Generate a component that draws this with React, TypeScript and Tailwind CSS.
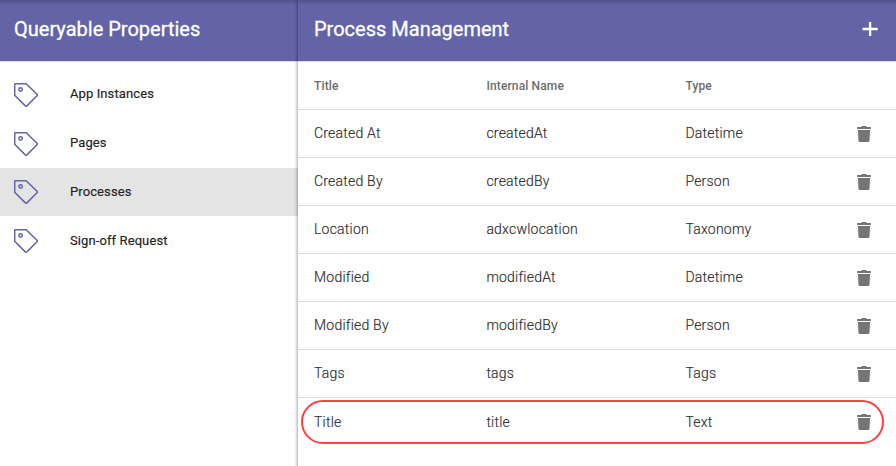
const items = [
  { label: 'App Instances', cls: 'mb-px', labelCls: '-mt-[3px]' },
  { label: 'Pages', cls: '', labelCls: '-mt-[3px]' },
  { label: 'Processes', cls: 'bg-[#e4e4e4] mb-px', labelCls: '-mt-px' },
  { label: 'Sign-off Request', cls: '', labelCls: '-mt-px' },
];

const rows = [
  ['Created At', 'createdAt', 'Datetime'],
  ['Created By', 'createdBy', 'Person'],
  ['Location', 'adxcwlocation', 'Taxonomy'],
  ['Modified', 'modifiedAt', 'Datetime'],
  ['Modified By', 'modifiedBy', 'Person'],
  ['Tags', 'tags', 'Tags'],
  ['Title', 'title', 'Text'],
];

function TagIcon() {
  return (
    <svg className="h-6 w-[25px] shrink-0" viewBox="0 0 25 24" fill="none" stroke="#6264a7" strokeWidth="1.5" strokeLinejoin="round">
      <path d="M1.4 .7H12.2L23 11.3Q23.7 12 23 12.7L12.9 22.9Q12.1 23.6 11.3 22.9L.7 12.2V1.4Q.7 .7 1.4 .7Z" />
      <circle cx="6.6" cy="6.5" r="1.7" />
    </svg>
  );
}

function TrashIcon() {
  return (
    <svg className="h-4 w-3.5" viewBox="0 0 14 16" fill="#757575">
      <path d="M5 0H9L10 1H13.4Q14 1 14 1.6V3H0V1.6Q0 1 .6 1H4Z" />
      <path d="M.9 4H13.1L12.5 14.7Q12.4 16 11.1 16H2.9Q1.6 16 1.5 14.7Z" />
    </svg>
  );
}

export default function App() {
  return (
    <div className="flex h-[466px] w-[896px] overflow-hidden bg-white font-['Roboto',sans-serif] text-[#2b2b2b]">
      <aside className="w-[298px] shrink-0">
        <header className="flex h-[62px] items-center border-b border-[#d9d9e9] bg-[#6264a7] bg-[linear-gradient(rgba(0,0,0,0.18),transparent_5px)] pb-[3px] pl-3.5 text-xl text-white">
          <h1 className="font-normal [-webkit-text-stroke:0.3px_white]">Queryable Properties</h1>
        </header>
        <nav className="flex flex-col pt-[9px]">
          {items.map((item) => (
            <a key={item.label} className={`flex h-12 items-center pl-3.5 ${item.cls}`}>
              <TagIcon />
              <span className={`ml-[31px] text-[13px] font-normal tracking-[0.1px] text-[#222] [-webkit-text-stroke:0.15px_#222] ${item.labelCls}`}>{item.label}</span>
            </a>
          ))}
        </nav>
      </aside>
      <main className="relative h-[480px] w-[598px] bg-white shadow-[-1px_0_3px_rgba(0,0,0,0.35)]">
        <header className="flex h-[62px] items-center justify-between border-b border-[#d9d9e9] bg-[#6264a7] bg-[linear-gradient(rgba(0,0,0,0.18),transparent_5px)] pb-[3px] pl-4 pr-[18px] text-xl text-white">
          <h2 className="font-normal [-webkit-text-stroke:0.3px_white]">Process Management</h2>
          <svg className="h-4 w-4" viewBox="0 0 16 16" stroke="white" strokeWidth="2.3">
            <path d="M.5 8H15.7M8.1 1V15" />
          </svg>
        </header>
        <div className="grid h-12 grid-cols-[172.4px_199px_1fr] items-center border-b border-[#dedede] pl-4 text-xs font-medium tracking-[0.14px] text-[#6c6c6c]">
          <span>Title</span>
          <span>Internal Name</span>
          <span>Type</span>
        </div>
        {rows.map(([title, name, type]) => (
          <div key={title} className="group grid h-12 grid-cols-[172.4px_199px_1fr_14px] items-center border-b border-[#dedede] pl-4 pr-[25px] text-sm font-light tracking-[0.22px] [-webkit-text-stroke:0.15px_#2b2b2b] last-of-type:border-transparent">
            <span className="pb-0.5 group-last-of-type:pb-0">{title}</span>
            <span className="pb-0.5 group-last-of-type:pb-0">{name}</span>
            <span className="pb-0.5 group-last-of-type:pb-0">{type}</span>
            <TrashIcon />
          </div>
        ))}
        <span className="absolute left-[3px] top-[400px] h-11 w-[583px] rounded-[22px] border-2 border-[#fa4144]" />
      </main>
    </div>
  );
}
